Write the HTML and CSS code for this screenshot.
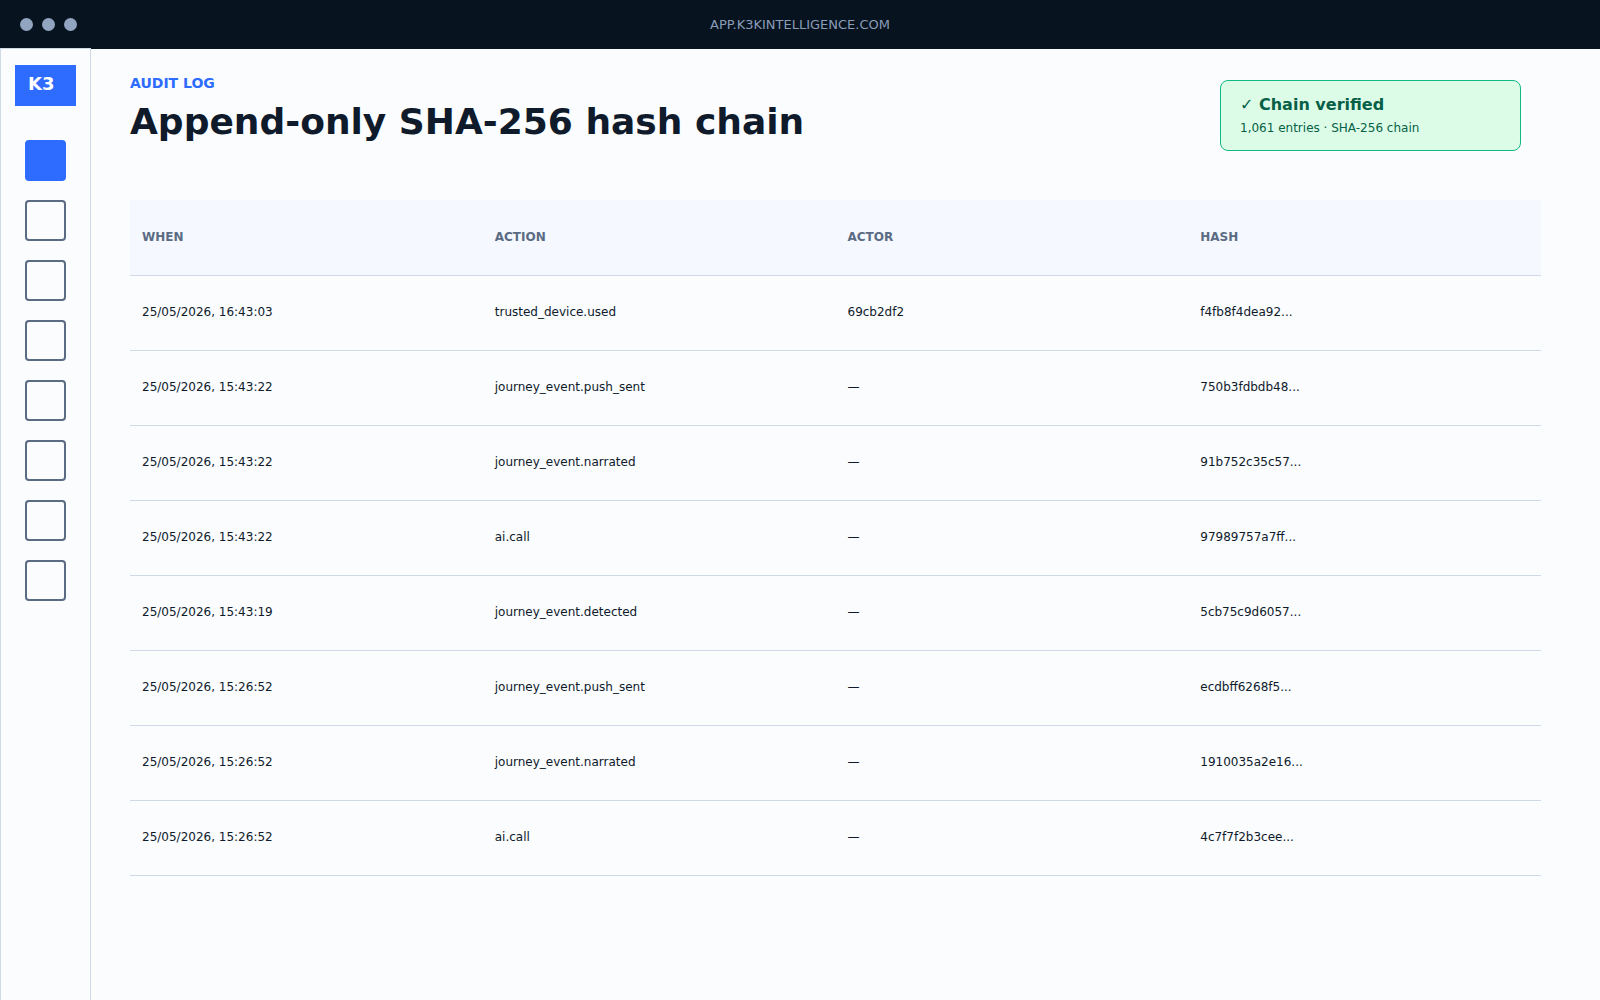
FILE: index.html
```html
<!DOCTYPE html>
<html lang="en">
<head>
  <meta charset="UTF-8">
  <meta name="viewport" content="width=device-width, initial-scale=1.0">
  <title>K3 - Audit log</title>
  <link rel="stylesheet" href="styles.css">
</head>
<body>
  <div class="topbar">
    <div class="dots">
      <span class="dot"></span>
      <span class="dot"></span>
      <span class="dot"></span>
    </div>
    <div class="url">APP.K3KINTELLIGENCE.COM</div>
  </div>

  <div class="layout">
    <aside class="sidebar">
      <div class="logo">K3</div>
      <nav>
        <a href="#" class="nav-item active" aria-label="Audit log"></a>
        <a href="#" class="nav-item" aria-label="Section 2"></a>
        <a href="#" class="nav-item" aria-label="Section 3"></a>
        <a href="#" class="nav-item" aria-label="Section 4"></a>
        <a href="#" class="nav-item" aria-label="Section 5"></a>
        <a href="#" class="nav-item" aria-label="Section 6"></a>
        <a href="#" class="nav-item" aria-label="Section 7"></a>
        <a href="#" class="nav-item" aria-label="Section 8"></a>
      </nav>
    </aside>

    <main>
      <header class="page-header">
        <div class="heading">
          <p class="eyebrow">AUDIT LOG</p>
          <h1>Append-only SHA-256 hash chain</h1>
        </div>
        <div class="chain-card">
          <p class="chain-title">✓ Chain verified</p>
          <p class="chain-info">1,061 entries · SHA-256 chain</p>
        </div>
      </header>

      <table>
        <thead>
          <tr><th>WHEN</th><th>ACTION</th><th>ACTOR</th><th>HASH</th></tr>
        </thead>
        <tbody>
          <tr><td>25/05/2026, 16:43:03</td><td>trusted_device.used</td><td>69cb2df2</td><td>f4fb8f4dea92...</td></tr>
          <tr><td>25/05/2026, 15:43:22</td><td>journey_event.push_sent</td><td>—</td><td>750b3fdbdb48...</td></tr>
          <tr><td>25/05/2026, 15:43:22</td><td>journey_event.narrated</td><td>—</td><td>91b752c35c57...</td></tr>
          <tr><td>25/05/2026, 15:43:22</td><td>ai.call</td><td>—</td><td>97989757a7ff...</td></tr>
          <tr><td>25/05/2026, 15:43:19</td><td>journey_event.detected</td><td>—</td><td>5cb75c9d6057...</td></tr>
          <tr><td>25/05/2026, 15:26:52</td><td>journey_event.push_sent</td><td>—</td><td>ecdbff6268f5...</td></tr>
          <tr><td>25/05/2026, 15:26:52</td><td>journey_event.narrated</td><td>—</td><td>1910035a2e16...</td></tr>
          <tr><td>25/05/2026, 15:26:52</td><td>ai.call</td><td>—</td><td>4c7f7f2b3cee...</td></tr>
        </tbody>
      </table>
    </main>
  </div>
</body>
</html>
```
FILE: styles.css
```css
:root {
  --bg: #fafcfe;
  --bar: #081320;
  --text: #0f1a2b;
  --muted: #5b6b84;
  --border: #d0d9e8;
  --primary: #2e6bff;
  --head-bg: #f5f8fe;
}

* { box-sizing: border-box; margin: 0; padding: 0; }

body {
  display: flex;
  flex-direction: column;
  min-height: 100vh;
  font-family: "DejaVu Sans", sans-serif;
  font-size: 12px;
  background: var(--bg);
  color: var(--text);
}

.topbar {
  display: grid;
  grid-template-columns: 1fr auto 1fr;
  align-items: center;
  height: 49px;
  padding: 0 20px;
  background: var(--bar);
}
.dots { display: flex; gap: 9px; }
.dot {
  width: 13px;
  height: 13px;
  border-radius: 50%;
  background: #92a5c0;
}
.url { font-size: 13px; color: #8a9cb8; }

.layout { display: flex; flex: 1; }

/* sidebar border sits on the bottom edge of the top bar */
.sidebar {
  width: 91px;
  flex-shrink: 0;
  margin-top: -1px;
  padding: 16px 14px;
  background: var(--bg);
  border: 1px solid var(--border);
  border-bottom: none;
}
.logo {
  height: 41px;
  padding-left: 13px;
  margin-bottom: 34px;
  font-size: 18px;
  font-weight: bold;
  line-height: 38px;
  color: #fff;
  background: var(--primary);
}
nav {
  display: flex;
  flex-direction: column;
  align-items: center;
  gap: 19px;
}
.nav-item {
  width: 41px;
  height: 41px;
  border: 2px solid var(--muted);
  border-radius: 4px;
}
.nav-item.active {
  background: var(--primary);
  border-color: var(--primary);
}

main { flex: 1; padding: 24px 59px 24px 39px; }

.page-header {
  display: flex;
  justify-content: space-between;
  align-items: flex-start;
  min-height: 127px;
  padding-right: 20px;
}
.eyebrow {
  font-size: 14px;
  font-weight: bold;
  line-height: 20px;
  color: var(--primary);
}
h1 { margin-top: 7px; font-size: 36px; line-height: 44px; }

.chain-card {
  width: 301px;
  height: 71px;
  margin-top: 7px;
  padding: 14px 19px;
  color: #065f46;
  background: #dcfce7;
  border: 1px solid #10b981;
  border-radius: 8px;
}
.chain-title { font-size: 16px; font-weight: bold; line-height: 20px; }
.chain-info { margin-top: 5px; line-height: 16px; }

table {
  width: 100%;
  table-layout: fixed;
  border-spacing: 0;
}
th, td {
  height: 75px;
  padding: 0 12px 2px;
  text-align: left;
  border-bottom: 1px solid var(--border);
}
th {
  height: 76px;
  color: var(--muted);
  background: var(--head-bg);
}
```
